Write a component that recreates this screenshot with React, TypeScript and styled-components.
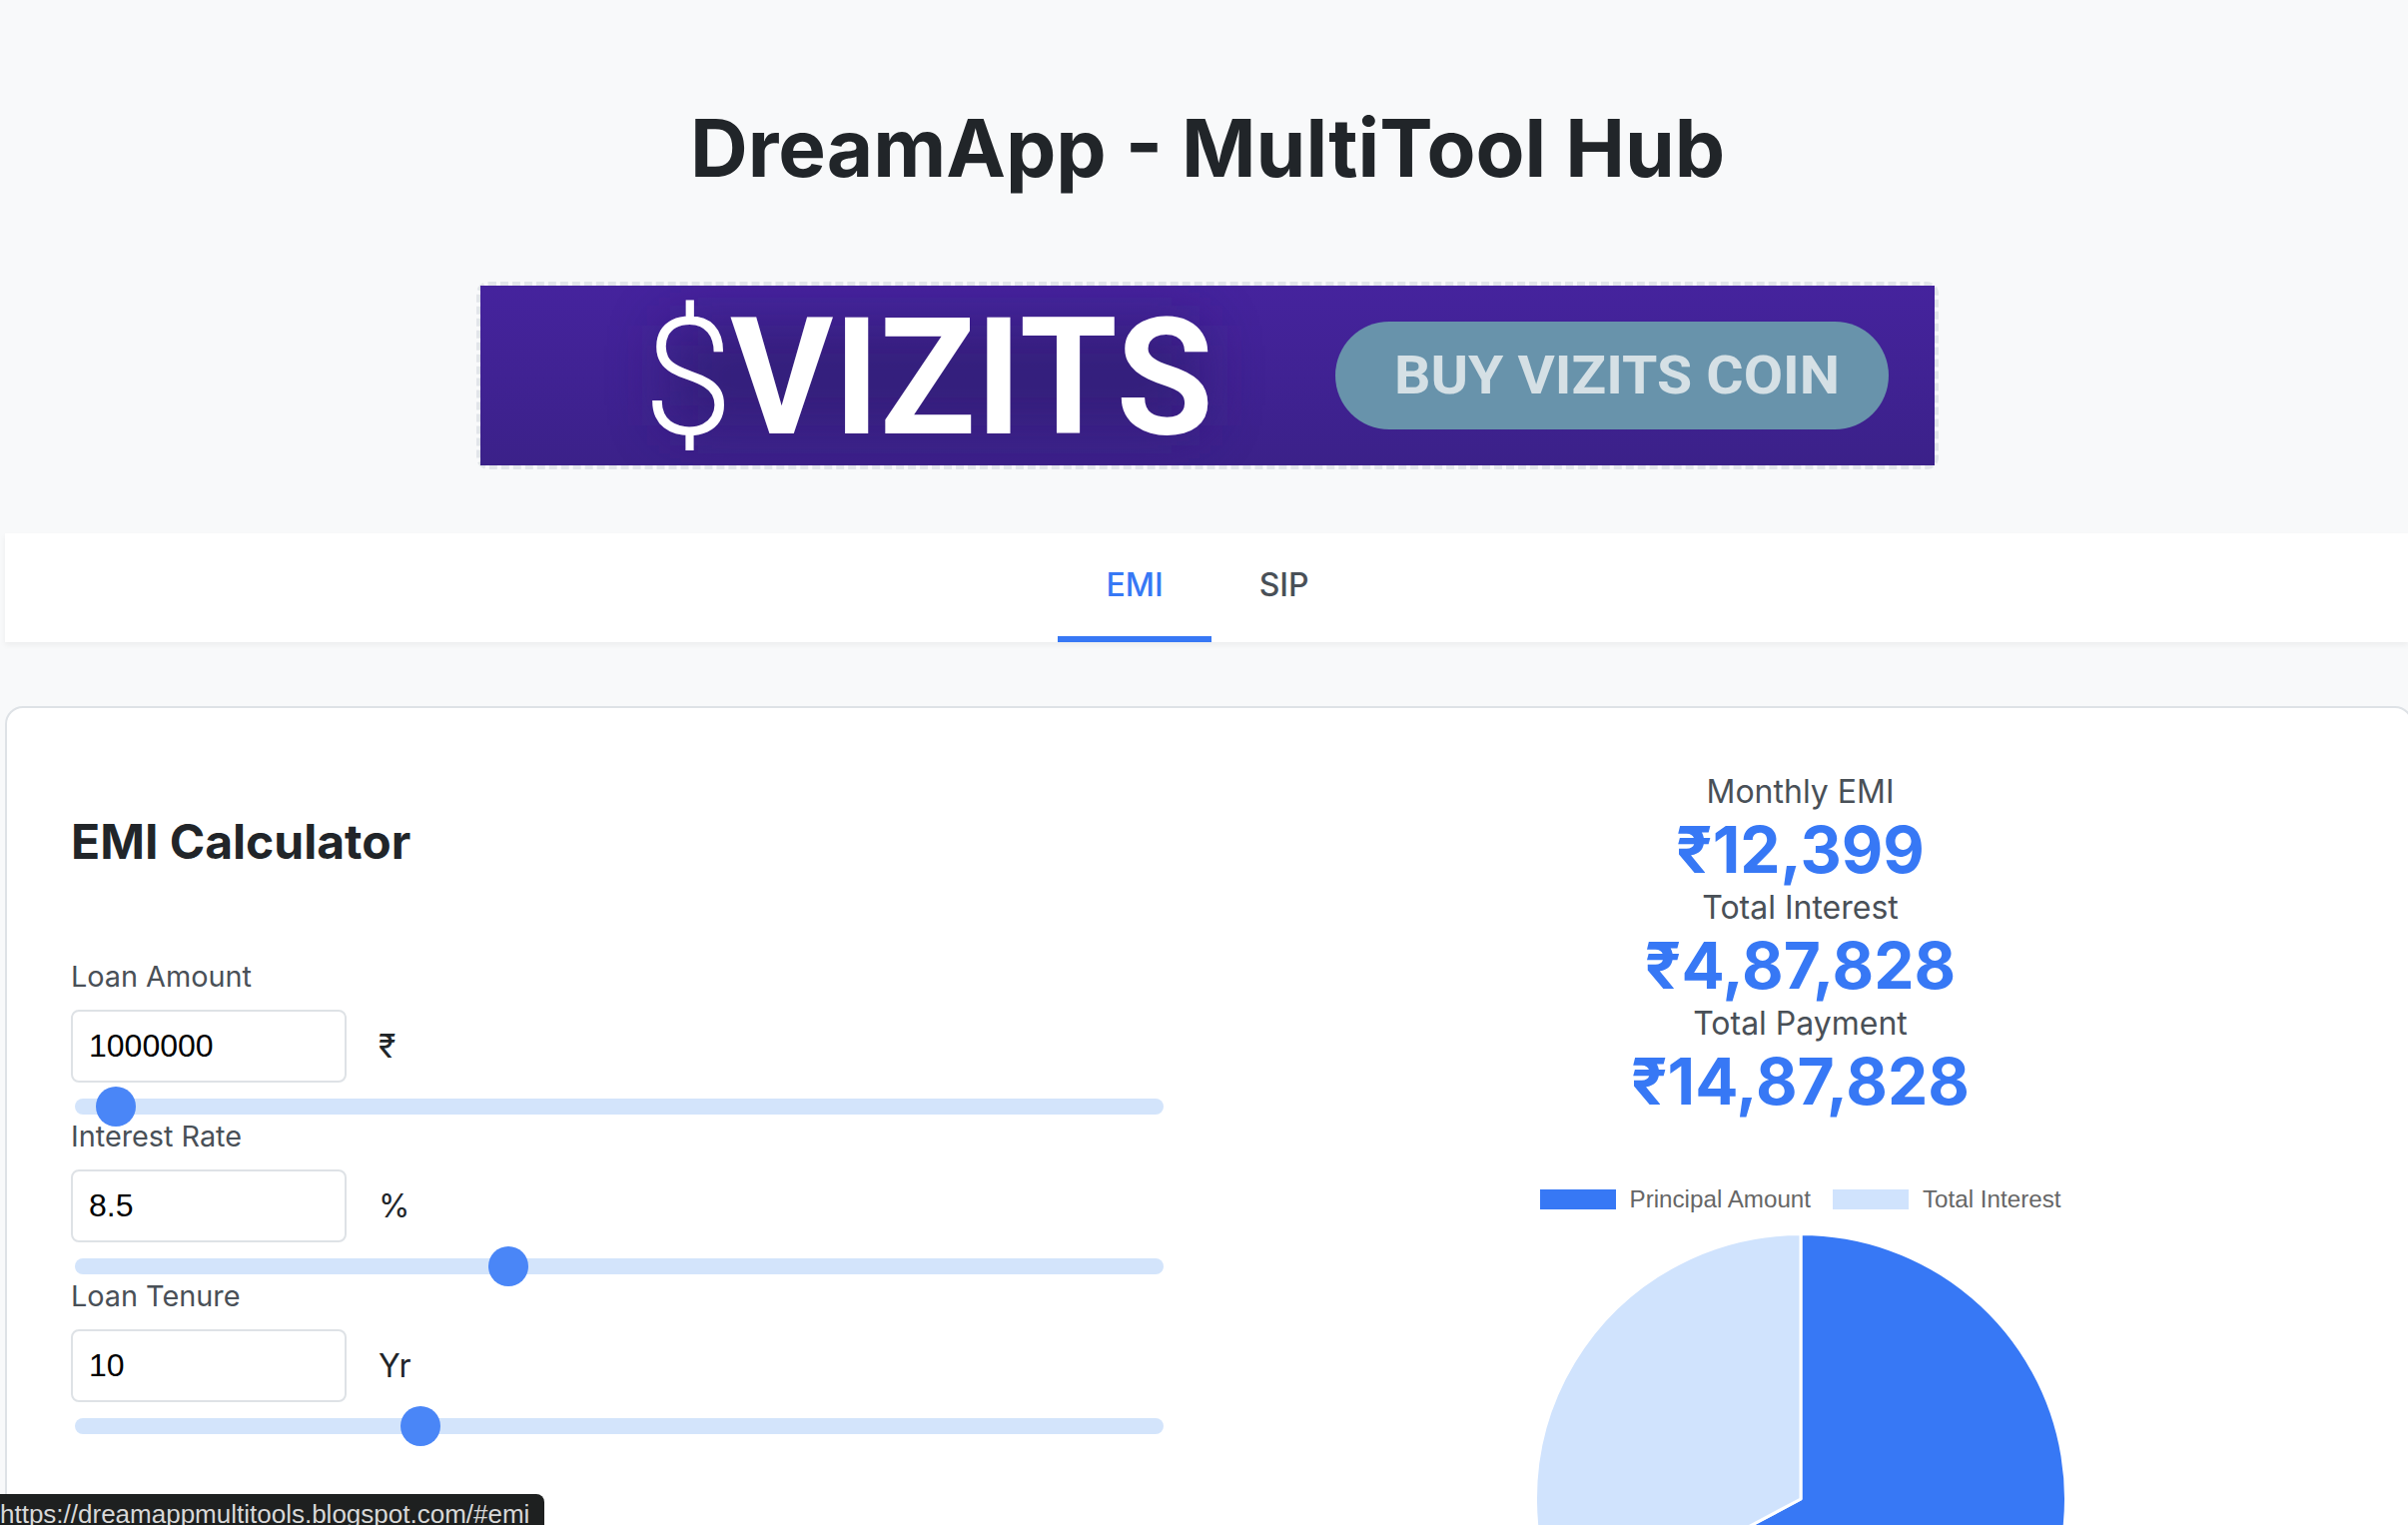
import React from "react";
import styled, { createGlobalStyle } from "styled-components";

const GlobalStyle = createGlobalStyle`
  html, body {
    margin: 0;
    height: 100%;
    overflow: hidden;
    background: #f8f9fa;
  }
  body {
    font-family: Inter, "Noto Sans", sans-serif;
    color: #212529;
  }
  * { box-sizing: border-box; }
`;

const Page = styled.div`
  height: 1527px;
  overflow: hidden;
  padding-left: 5px;
`;

const Header = styled.header`
  padding-top: 96px;
  padding-left: 2px;
  text-align: center;
`;

const Title = styled.h1`
  margin: 0;
  font-size: 80px;
  line-height: 104px;
  font-weight: 700;
  color: #212529;
`;

const BannerFrame = styled.div`
  width: 1464px;
  height: 188px;
  margin: 82px auto 0;
  border: 4px dashed #e2e5ea;
  border-radius: 12px;
  display: flex;
`;

const Tabs = styled.nav`
  height: 109px;
  margin-top: 64px;
  padding-left: 2px;
  background: #fff;
  display: flex;
  justify-content: center;
  box-shadow: 0 3px 6px rgba(0, 0, 0, 0.05);
`;

const Tab = styled.a<{ $active?: boolean }>`
  height: 109px;
  padding: 0 48px;
  font-size: 32px;
  line-height: 103px;
  font-weight: 500;
  color: ${(p) => (p.$active ? "#3778f5" : "#495057")};
  border-bottom: 6px solid ${(p) => (p.$active ? "#3778f5" : "transparent")};
`;

const Card = styled.section`
  margin: 64px -5px 0 0;
  height: 1000px;
  background: #fff;
  border: 2px solid #dee2e6;
  border-radius: 18px;
  padding: 65px 64px;
  display: grid;
  grid-template-columns: 1097px 1085px;
  column-gap: 92px;
`;

const Heading = styled.h2`
  margin: 40px 0 88px;
  font-size: 48px;
  line-height: 58px;
  font-weight: 700;
  color: #212529;
`;

const Group = styled.div`
  height: 160px;
`;

const Label = styled.label`
  display: block;
  font-size: 28.8px;
  line-height: 36px;
  color: #495057;
  margin-bottom: 15px;
`;

const InputRow = styled.div`
  display: flex;
  align-items: center;
  gap: 32px;
`;

const NumberInput = styled.input`
  width: 276px;
  height: 73px;
  padding: 0 16px;
  border: 2px solid #dee2e6;
  border-radius: 8px;
  background: #fff;
  font-family: "Liberation Sans", Arial, sans-serif;
  font-size: 32px;
  color: #000;
  outline: none;
`;

const Unit = styled.span`
  font-size: 32px;
  color: #212529;
`;

const Slider = styled.input`
  -webkit-appearance: none;
  appearance: none;
  display: block;
  width: 1090px;
  height: 16px;
  margin: 16px 0 0 4px;
  border-radius: 8px;
  background: #d3e4fb;
  outline: none;

  &::-webkit-slider-thumb {
    -webkit-appearance: none;
    appearance: none;
    width: 40px;
    height: 40px;
    border-radius: 50%;
    background: #4a86f7;
    border: none;
  }
`;

const Results = styled.div`
  padding-top: 1px;
  text-align: center;
`;

const ResultLabel = styled.div`
  font-size: 32px;
  line-height: 36px;
  color: #495057;
`;

const ResultValue = styled.div`
  font-size: 64px;
  line-height: 80px;
  font-weight: 700;
  color: #3778f5;
`;

const Legend = styled.div`
  display: flex;
  justify-content: center;
  align-items: center;
  height: 20px;
  margin-top: 68px;
  font-family: "Liberation Sans", Arial, sans-serif;
  font-size: 24.2px;
  color: #666;
`;

const LegendItem = styled.span`
  display: flex;
  align-items: center;
  gap: 14px;
  & + & { margin-left: 22px; }
`;

const Swatch = styled.i<{ $color: string }>`
  display: block;
  width: 76px;
  height: 20px;
  background: ${(p) => p.$color};
`;

const PieWrap = styled.div`
  display: flex;
  justify-content: center;
  margin-top: 20px;
`;

const StatusTip = styled.div`
  position: fixed;
  left: 0;
  top: 1496px;
  width: 545px;
  height: 50px;
  background: #1e2020;
  border-top-right-radius: 8px;
  color: #d8d8d8;
  font-family: "Liberation Sans", Arial, sans-serif;
  font-size: 26px;
  line-height: 40px;
  white-space: nowrap;
  overflow: hidden;
`;

const Banner = () => (
  <svg width="1456" height="180" viewBox="0 0 1456 180">
    <defs>
      <linearGradient id="bannerBg" x1="0" y1="0" x2="0" y2="1">
        <stop offset="0" stopColor="#45239d" />
        <stop offset="1" stopColor="#3b2189" />
      </linearGradient>
      <filter id="soft" x="-40%" y="-150%" width="180%" height="400%">
        <feGaussianBlur stdDeviation="30" />
      </filter>
    </defs>
    <rect width="1456" height="180" fill="url(#bannerBg)" />
    <rect x="190" y="40" width="530" height="100" fill="#2f1a6e" opacity="0.65" filter="url(#soft)" />
    <text x="163" y="148" fontFamily="Roboto, sans-serif" fontWeight="300" fontSize="164" fill="#fff" textLength="90" lengthAdjust="spacingAndGlyphs">$</text>
    <text x="250" y="148" fontFamily="Roboto, sans-serif" fontWeight="700" fontSize="164" fill="#fff" textLength="484" lengthAdjust="spacingAndGlyphs">VIZITS</text>
    <rect x="856" y="36" width="554" height="108" rx="54" fill="#6893ab" />
    <text x="915" y="108" fontFamily="Roboto, sans-serif" fontWeight="700" fontSize="53" fill="#d5e0e5" textLength="446" lengthAdjust="spacingAndGlyphs">BUY VIZITS COIN</text>
  </svg>
);

const Pie = () => (
  <svg width="540" height="540" viewBox="0 0 540 540">
    <path d="M270 270 L270 4.5 A265.5 265.5 0 1 1 35.6 394.7 Z" fill="#3778f5" stroke="#fff" strokeWidth="3" strokeLinejoin="round" />
    <path d="M270 270 L35.6 394.7 A265.5 265.5 0 0 1 270 4.5 Z" fill="#d0e3fd" stroke="#fff" strokeWidth="3" strokeLinejoin="round" />
  </svg>
);

const fields = [
  { label: "Loan Amount", value: "1000000", unit: "₹", pos: 20 },
  { label: "Interest Rate", value: "8.5", unit: "%", pos: 394 },
  { label: "Loan Tenure", value: "10", unit: "Yr", pos: 310 },
];

const results = [
  { label: "Monthly EMI", value: "₹12,399" },
  { label: "Total Interest", value: "₹4,87,828" },
  { label: "Total Payment", value: "₹14,87,828" },
];

export default function App() {
  return (
    <Page>
      <GlobalStyle />
      <Header>
        <Title>DreamApp - MultiTool Hub</Title>
        <BannerFrame>
          <Banner />
        </BannerFrame>
      </Header>
      <Tabs>
        <Tab $active>EMI</Tab>
        <Tab>SIP</Tab>
      </Tabs>
      <Card>
        <div>
          <Heading>EMI Calculator</Heading>
          {fields.map((f) => (
            <Group key={f.label}>
              <Label>{f.label}</Label>
              <InputRow>
                <NumberInput type="text" defaultValue={f.value} />
                <Unit>{f.unit}</Unit>
              </InputRow>
              <Slider type="range" min={0} max={1000} defaultValue={f.pos} />
            </Group>
          ))}
        </div>
        <div>
          <Results>
            {results.map((r) => (
              <div key={r.label}>
                <ResultLabel>{r.label}</ResultLabel>
                <ResultValue>{r.value}</ResultValue>
              </div>
            ))}
          </Results>
          <Legend>
            <LegendItem>
              <Swatch $color="#3778f5" />
              Principal Amount
            </LegendItem>
            <LegendItem>
              <Swatch $color="#d0e3fd" />
              Total Interest
            </LegendItem>
          </Legend>
          <PieWrap>
            <Pie />
          </PieWrap>
        </div>
      </Card>
      <StatusTip>https://dreamappmultitools.blogspot.com/#emi</StatusTip>
    </Page>
  );
}
